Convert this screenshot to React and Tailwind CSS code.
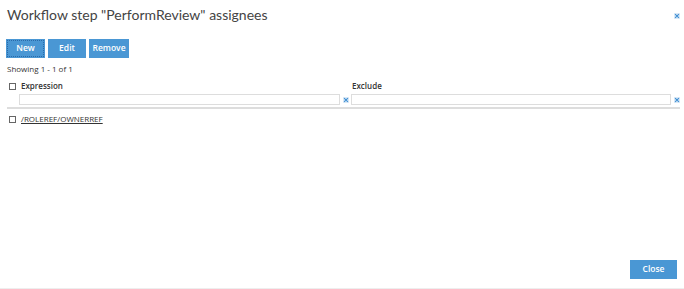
import React from "react";

const X = ({ className = "" }) => (
  <svg viewBox="0 0 8 8" className={className} width="6" height="6">
    <rect x="0" y="0" width="8" height="8" fill="#dbe9f6" />
    <path d="M1.5 1.5 L6.5 6.5 M6.5 1.5 L1.5 6.5" stroke="#3b8dd3" strokeWidth="1.4" />
  </svg>
);

const Cb = () => (
  <span className="inline-block w-[7px] h-[7px] border border-[#666] bg-white shrink-0" />
);

export default function App() {
  return (
    <div className="w-[684px] h-[289px] bg-white relative flex flex-col text-[#333]" style={{ fontFamily: '"Open Sans", sans-serif' }}>
      <div className="flex items-center justify-between pl-[7px] pr-[4px] pt-[3px] h-[26px]">
        <div className="text-[14px] font-normal text-[#444] leading-none" style={{ fontFamily: 'Lato, "Open Sans", sans-serif' }}>
          Workflow step "PerformReview" assignees
        </div>
        <X className="mt-[2px]" />
      </div>
      <div className="flex gap-[3px] pl-[6px] mt-[13px]">
        <button className="h-[19px] w-[39px] bg-[#4a97d4] text-white text-[8.5px] font-semibold outline outline-1 outline-dotted outline-[#2a6aa8] -outline-offset-2">New</button>
        <button className="h-[19px] w-[38px] bg-[#4a97d4] text-white text-[8.5px] font-semibold">Edit</button>
        <button className="h-[19px] w-[40px] bg-[#4a97d4] text-white text-[8.5px] font-semibold">Remove</button>
      </div>
      <div className="pl-[7px] mt-[7px] text-[8px] leading-none text-[#333]">Showing 1 - 1 of 1</div>
      <div className="flex pl-[9px] mt-[9px] items-center">
        <Cb />
        <div className="w-[336px] pl-[5px] text-[8px] font-semibold leading-none">Expression</div>
        <div className="text-[8px] font-semibold leading-none">Exclude</div>
      </div>
      <div className="flex items-center pl-[19px] mt-[4px] h-[11px]">
        <div className="w-[321px] h-[11px] border border-[#ddd] bg-white" />
        <X className="ml-[3px]" />
        <div className="w-[320px] h-[11px] border border-[#ddd] bg-white ml-[2px]" />
        <X className="ml-[3px]" />
      </div>
      <div className="mx-[7px] mt-[2px] h-[2px] bg-[#ddd] w-[673px]" />
      <div className="flex items-center pl-[9px] mt-[6px]">
        <Cb />
        <span className="pl-[5px] text-[8px] underline leading-none">/ROLEREF/OWNERREF</span>
      </div>
      <div className="flex-1" />
      <div className="flex justify-end pr-[7px] mb-[9px]">
        <button className="h-[19px] w-[47px] bg-[#4a97d4] text-white text-[8.5px] font-semibold">Close</button>
      </div>
      <div className="h-px bg-[#eee] w-full" />
    </div>
  );
}
